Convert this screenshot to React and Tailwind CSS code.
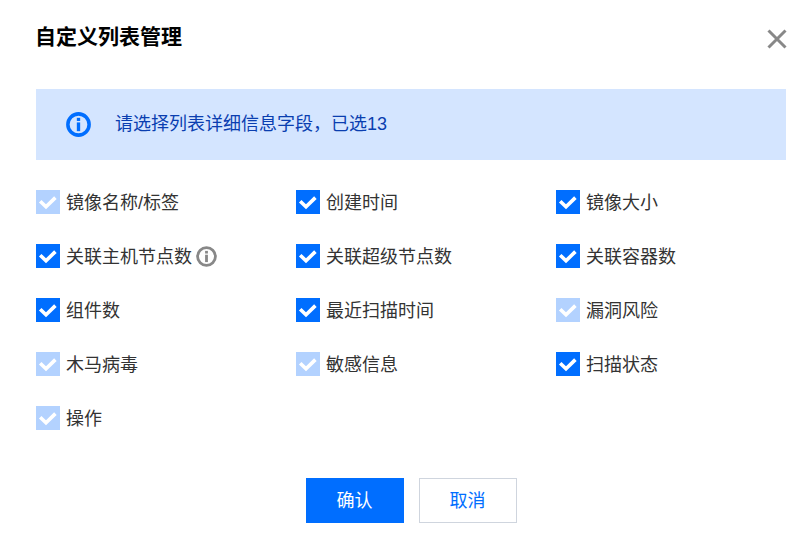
const items = [
  ["镜像名称/标签", true], ["创建时间"], ["镜像大小"],
  ["关联主机节点数", false, true], ["关联超级节点数"], ["关联容器数"],
  ["组件数"], ["最近扫描时间"], ["漏洞风险", true],
  ["木马病毒", true], ["敏感信息", true], ["扫描状态"],
  ["操作", true],
];

function Check({ disabled }) {
  return (
    <span className={`flex h-6 w-6 shrink-0 items-center justify-center ${disabled ? "bg-[#b3d2ff]" : "bg-[#006eff]"}`}>
      <svg width="24" height="24" viewBox="0 0 24 24" fill="none">
        <path d="M4.2 11.2 L10 16.8 L19.4 7.6" stroke="white" strokeWidth="3.6" />
      </svg>
    </span>
  );
}

function Info({ size, color, sw }) {
  return (
    <svg width={size} height={size} viewBox="0 0 24 24" fill="none">
      <circle cx="12" cy="12" r="10.2" stroke={color} strokeWidth={sw} />
      <rect x="10.4" y="5.6" width="3.2" height="3" fill={color} />
      <rect x="10.4" y="10" width="3.2" height="8.4" fill={color} />
    </svg>
  );
}

export default function App() {
  return (
    <div className="h-[547px] w-[812px] overflow-hidden bg-white pl-9 pr-[26px] font-['Liberation_Sans','Noto_Sans_CJK_SC',sans-serif]">
      <div className="flex h-[89px] items-start justify-between">
        <h1 className="mt-[22px] -ml-px text-[21px] leading-[30px] font-bold text-black">自定义列表管理</h1>
        <svg className="mt-[27px] mr-[-3px]" width="24" height="24" viewBox="0 0 24 24" fill="none">
          <path d="M3.5 3.5 L20.5 20.5 M20.5 3.5 L3.5 20.5" stroke="#888888" strokeWidth="3" />
        </svg>
      </div>
      <div className="flex h-[71px] w-[750px] items-center gap-6 bg-[#d4e5ff] pl-[30px] text-[18px] text-[#0a3eb0]">
        <Info size={25} color="#006eff" sw={3.4} />
        <span>请选择列表详细信息字段，已选13</span>
      </div>
      <div className="mt-[30px] grid w-[780px] grid-cols-3 gap-y-[30px]">
        {items.map(([label, disabled, info]) => (
          <div key={label} className="flex h-6 items-center gap-1.5">
            <Check disabled={disabled} />
            <span className="pt-0.5 text-[18px] leading-6 text-[#333333]">{label}</span>
            {info && <span className="-ml-0.5"><Info size={21} color="#888888" sw={3.2} /></span>}
          </div>
        ))}
      </div>
      <div className="mt-[48px] flex w-[750px] justify-center gap-[15px] text-[18px]">
        <button className="h-[45px] w-[98px] bg-[#006eff] pt-0.5 text-white">确认</button>
        <button className="h-[45px] w-[98px] border border-[#cfd5de] bg-white pt-0.5 text-[#006eff]">取消</button>
      </div>
    </div>
  );
}
